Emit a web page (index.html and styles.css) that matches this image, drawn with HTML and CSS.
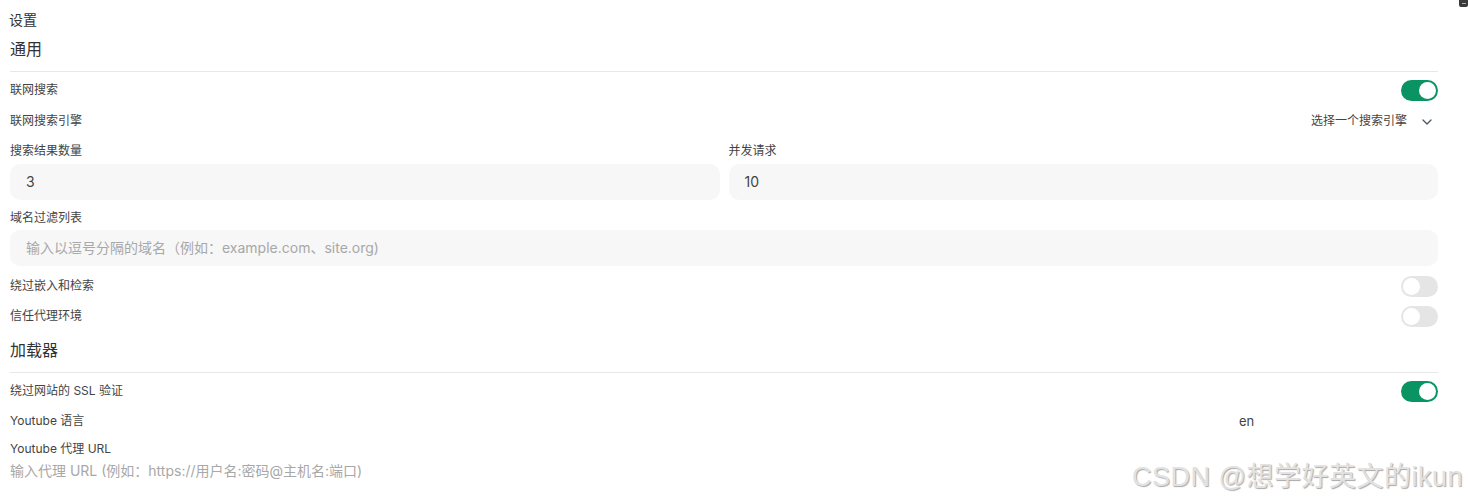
FILE: index.html
```html
<!DOCTYPE html>
<html lang="zh-CN">
<head>
<meta charset="utf-8">
<title>设置</title>
<link rel="stylesheet" href="styles.css">
</head>
<body>
<div class="corner-badge"><span></span></div>
<main class="page">
  <div class="title">设置</div>

  <section class="section">
    <div class="section-head">通用</div>
    <div class="row row-first">
      <span class="label">联网搜索</span>
      <span class="toggle on"><span class="knob"></span></span>
    </div>
    <div class="row row-engine">
      <span class="label">联网搜索引擎</span>
      <span class="select">选择一个搜索引擎
        <svg class="chev" width="10" height="6" viewBox="0 0 10 6"><path d="M1 1l4 4 4-4" fill="none" stroke="#4b5563" stroke-width="1.3" stroke-linecap="round" stroke-linejoin="round"/></svg>
      </span>
    </div>
    <div class="grid2">
      <div class="field">
        <div class="field-label">搜索结果数量</div>
        <div class="input">3</div>
      </div>
      <div class="field">
        <div class="field-label">并发请求</div>
        <div class="input">10</div>
      </div>
    </div>
    <div class="field field-wide">
      <div class="field-label">域名过滤列表</div>
      <div class="input placeholder">输入以逗号分隔的域名（例如：example.com、site.org)</div>
    </div>
    <div class="row row-t1">
      <span class="label">绕过嵌入和检索</span>
      <span class="toggle"><span class="knob"></span></span>
    </div>
    <div class="row row-t2">
      <span class="label">信任代理环境</span>
      <span class="toggle"><span class="knob"></span></span>
    </div>
  </section>

  <section class="section">
    <div class="section-head head-2">加载器</div>
    <div class="row row-first">
      <span class="label">绕过网站的 SSL 验证</span>
      <span class="toggle on"><span class="knob"></span></span>
    </div>
    <div class="row row-lang">
      <span class="label">Youtube 语言</span>
      <span class="value">en</span>
    </div>
    <div class="field-label proxy-label">Youtube 代理 URL</div>
    <div class="plain-placeholder">输入代理 URL (例如：https://用户名:密码@主机名:端口)</div>
  </section>
</main>
<div class="watermark">CSDN @想学好英文的ikun</div>
</body>
</html>
```

FILE: styles.css
```css
* { box-sizing: border-box; }
html, body { margin: 0; padding: 0; background: #fff; }
body {
  font-family: Inter, "Noto Sans CJK SC", "Liberation Sans", sans-serif;
  color: #333;
  width: 1468px;
  height: 503px;
  overflow: hidden;
  position: relative;
}
.page {
  padding: 10px 30px 0 10px;
}
.title {
  font-size: 14px;
  line-height: 20px;
  color: #333;
  margin-left: -1px;
}
.section-head {
  font-size: 16px;
  line-height: 24px;
  margin-top: 7px;
  padding-bottom: 10px;
  border-bottom: 1px solid #e8e8e8;
  color: #333;
}
.head-2 { margin-top: 12px; }
.row {
  display: flex;
  justify-content: space-between;
  align-items: center;
  height: 20px;
}
.row-first { margin-top: 8px; }
.row-engine { margin-top: 11px; }
.row-t1 { margin-top: 10px; }
.row-t2 { margin-top: 10px; }
.row-lang { margin-top: 10px; }
.label {
  font-size: 12px;
  line-height: 16px;
  color: #444;
  margin-bottom: 1px;
}
.toggle {
  width: 37px;
  height: 21px;
  border-radius: 11px;
  background: #e5e5e5;
  padding: 2px;
  display: flex;
  justify-content: flex-start;
}
.toggle.on {
  background: #0b9463;
  justify-content: flex-end;
}
.knob {
  width: 17px;
  height: 17px;
  border-radius: 50%;
  background: #fff;
}
.select {
  font-size: 12px;
  line-height: 16px;
  color: #444;
  display: flex;
  align-items: center;
  gap: 15px;
  padding-right: 6px;
  margin-bottom: 0;
}
.chev { display: block; margin-top: 2px; }
.grid2 {
  display: grid;
  grid-template-columns: 1fr 1fr;
  column-gap: 9px;
  margin-top: 12px;
}
.field-label {
  font-size: 12px;
  line-height: 16px;
  color: #444;
}
.input {
  margin-top: 5px;
  height: 36px;
  border-radius: 10px;
  background: #f7f7f7;
  font-size: 14px;
  line-height: 36px;
  padding-left: 16px;
  color: #444;
}
.input.placeholder { color: #a8a8a8; }
.field-wide { margin-top: 9px; }
.field-wide .field-label { position: relative; top: 1px; }
.value {
  font-size: 13px;
  color: #444;
  width: 199px;
}
.proxy-label { margin-top: 10px; }
.plain-placeholder {
  font-size: 14px;
  line-height: 16px;
  margin-top: 6px;
  color: #a8a8a8;
}
.watermark {
  position: absolute;
  right: 5px;
  top: 460px;
  font-size: 27px;
  line-height: 34px;
  letter-spacing: 0.5px;
  color: #e2e2e2;
  text-shadow: 1px 1px 1px #a8a8a8;
  font-family: "Liberation Sans", "Noto Sans CJK SC", sans-serif;
}
.corner-badge {
  position: absolute;
  top: -4px;
  right: 0;
  width: 9px;
  height: 11px;
  background: #3a3a3a;
  border-radius: 2px;
}
.corner-badge span {
  position: absolute;
  left: 3px;
  top: 7px;
  width: 4px;
  height: 1px;
  background: #9ac64a;
}
```
